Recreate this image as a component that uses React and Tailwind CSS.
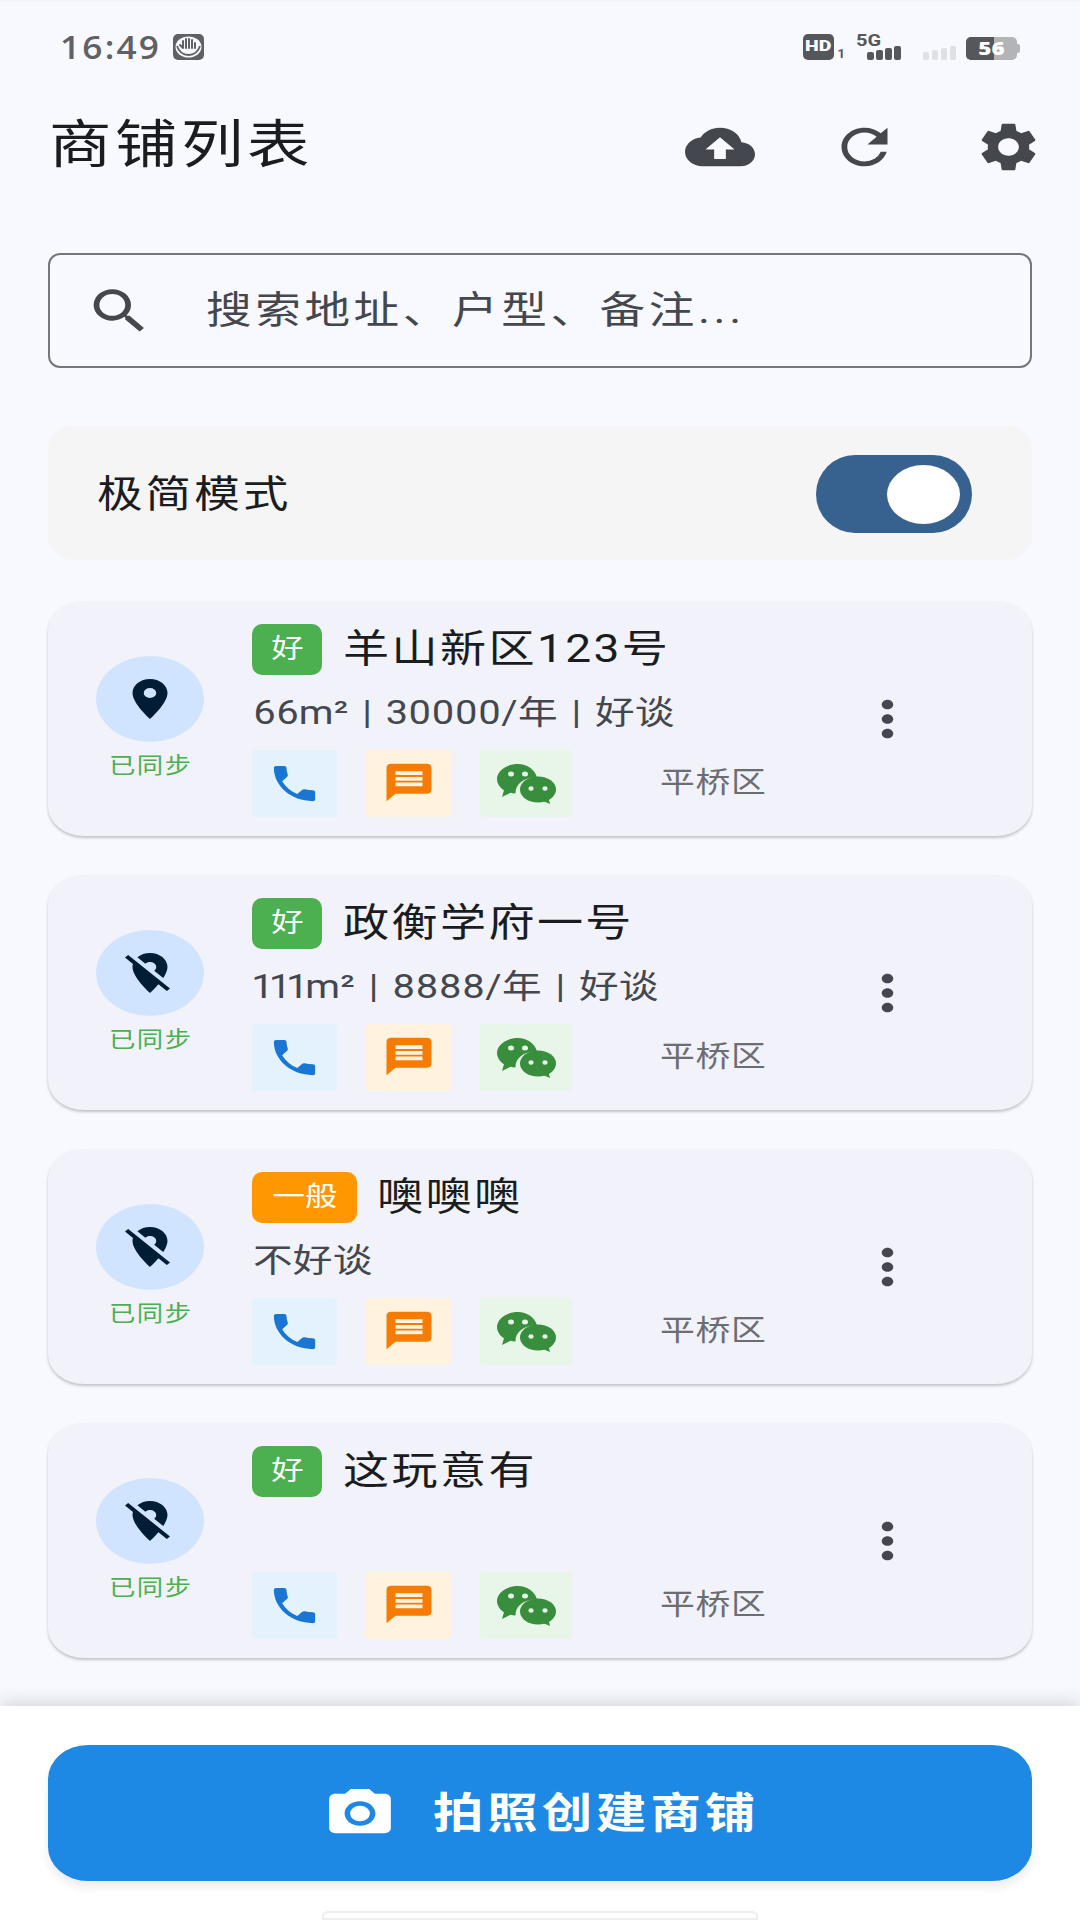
import React from "react";
import { MdCloudUpload, MdRefresh, MdSettings, MdSearch, MdMoreVert, MdPhone, MdMessage, MdPlace, MdLocationOff, MdCameraAlt } from "react-icons/md";

const FONT = "font-['Roboto','Noto_Sans_CJK_SC',sans-serif]";

function T({ className = "", children }) {
  return <span className={`inline-block origin-left scale-x-[1.2] whitespace-nowrap ${FONT} ${className}`}>{children}</span>;
}

function Icon({ as: C, w, h, className = "" }) {
  return <C preserveAspectRatio="none" style={{ width: w, height: h }} className={`shrink-0 ${className}`} />;
}

function Wechat() {
  return (
    <svg width="59" height="40" viewBox="0 0 59 40" className="shrink-0 mt-[1px]">
      <path d="M21 0C9.500 0 0 6.800 0 15c0 4.500 2.800 8.500 7 11.200L5 33l8.500-4.200c1.600.4 3.200.6 5 .7C18.200 20 27 13 40 13.500 38 5.500 30 0 21 0z" fill="#388e3c" />
      <ellipse cx="41" cy="25.500" rx="18" ry="13" fill="#388e3c" />
      <path d="M46 37l7 3-1.500-6z" fill="#388e3c" />
      <ellipse cx="14" cy="10" rx="3" ry="2.500" fill="#e8f5e9" />
      <ellipse cx="28" cy="10" rx="3" ry="2.500" fill="#e8f5e9" />
      <ellipse cx="34" cy="24.500" rx="2.600" ry="2.200" fill="#e8f5e9" />
      <ellipse cx="48" cy="24.500" rx="2.600" ry="2.200" fill="#e8f5e9" />
    </svg>
  );
}

function HandIcon() {
  return (
    <svg width="31" height="26" viewBox="0 0 31 26" className="shrink-0 ml-[15px]">
      <rect width="31" height="26" rx="5" fill="#5f6165" />
      <ellipse cx="15.500" cy="13" rx="13" ry="10.500" fill="#f8f9ff" />
      <path d="M4 12c2 6 6 9 11.500 9S25 18 27 12" fill="none" stroke="#5f6165" strokeWidth="1.800" />
      <path d="M10 14V7M13 14V5M16 14V5M19 14V6M22 14V9M10 14l-3-3" fill="none" stroke="#5f6165" strokeWidth="2" strokeLinecap="round" />
    </svg>
  );
}

function Bars({ color, ml = "" }) {
  const hs = [8, 10, 12, 14];
  return (
    <div className={`flex items-end gap-[2.500px] ${ml}`}>
      {hs.map((h, i) => (
        <div key={i} className="w-[6.500px] rounded-[2px]" style={{ height: h, background: color }} />
      ))}
    </div>
  );
}

function StatusBar() {
  return (
    <div className="h-[92px] flex items-center pl-[60px] pr-[60px] pt-[1px]">
      <span className="w-[98px] font-['Open_Sans',sans-serif] font-semibold text-[32px] leading-none text-[#5f6165] tracking-[2px] scale-x-[1.1] origin-left inline-block">16:49</span>
      <HandIcon />
      <div className="ml-auto flex items-end h-[26px]">
        <div className="w-[31px] h-[26px] rounded-[5px] bg-[#55575b] flex items-center justify-center">
          <span className="font-['Roboto',sans-serif] font-black text-[15px] leading-none text-white scale-x-[1.3] inline-block">HD</span>
        </div>
        <span className="font-['Roboto',sans-serif] font-bold text-[13px] leading-none text-[#55575b] ml-[4px] w-[18px]">1</span>
        <div className="relative w-[45px] h-[26px]">
          <span className="absolute left-0 -top-[1px] font-['Roboto',sans-serif] font-bold text-[16px] leading-none text-[#55575b] scale-x-[1.25] origin-left inline-block">5G</span>
          <div className="absolute right-0 bottom-0"><Bars color="#55575b" /></div>
        </div>
        <Bars color="#dfe0e3" ml="ml-[22px]" />
        <div className="relative ml-[10px] w-[51px] h-[23px] rounded-[5px] bg-[#b3b4b7] overflow-hidden flex items-center justify-center">
          <div className="absolute left-0 top-0 bottom-0 w-[28px] bg-[#55575b]" />
          <span className="relative font-['Open_Sans',sans-serif] font-extrabold text-[18px] leading-none text-white scale-x-[1.25] inline-block">56</span>
        </div>
        <div className="w-[3px] h-[9px] rounded-r-[2px] bg-[#b3b4b7] mb-[7px]" />
      </div>
    </div>
  );
}

function Header() {
  return (
    <div className="h-[104px] flex items-center pl-[49px] pr-[37px]">
      <T className="mt-[3px] text-[52px] leading-none text-[#1a1c1e] tracking-[3px]">商铺列表</T>
      <div className="ml-auto flex items-center gap-[75px] pt-[5px] text-[#44474e]">
        <Icon as={MdCloudUpload} w={70} h={58} />
        <Icon as={MdRefresh} w={69} h={58} />
        <Icon as={MdSettings} w={69} h={58} />
      </div>
    </div>
  );
}

function Search() {
  return (
    <div className="mt-[57px] mx-[48px] h-[115px] rounded-[12px] border-[2.500px] border-[#74777b] flex items-center pl-[35px]">
      <Icon as={MdSearch} w={69} h={58} className="text-[#44474e] mt-[1px]" />
      <T className="ml-[52px] -mt-[2px] text-[38px] leading-none text-[#44474e] tracking-[3px]">搜索地址、户型、备注...</T>
    </div>
  );
}

function Toggle() {
  return (
    <div className="mt-[58px] mx-[48px] h-[134px] rounded-[24px] bg-[#f5f5f6] flex items-center pl-[49px] pr-[60px] pt-[2px]">
      <T className="text-[38px] leading-none text-[#1a1c1e] tracking-[2.500px]">极简模式</T>
      <div className="ml-auto w-[156px] h-[78px] bg-[#37618e] rounded-full flex items-center justify-end pr-[12px]">
        <div className="w-[73px] h-[59px] rounded-[50%] bg-white" />
      </div>
    </div>
  );
}

function Card({ synced, badge, badgeW, badgeBg, title, titleGap, sub }) {
  return (
    <div className="h-[235px] rounded-[36px/30px] bg-[#f2f3fa] shadow-[0_2px_3px_rgba(0,0,0,0.22)] flex pl-[48px] items-center">
      <div className="w-[108px] flex flex-col items-center shrink-0 -mt-[3px]">
        <div className="w-[108px] h-[86px] rounded-[50%] bg-[#d1e4ff] flex items-center justify-center">
          <Icon as={synced ? MdPlace : MdLocationOff} w={60} h={48} className="text-[#001d36]" />
        </div>
        <T className="mt-[12px] self-start ml-[13px] text-[22px] leading-[24px] text-[#4caf50] tracking-[1.200px]">已同步</T>
      </div>
      <div className="ml-[48px] w-[601px] flex flex-col pt-[3px]">
        <div className="flex items-center h-[51px]">
          <div className={`h-[51px] rounded-[10px] flex items-center justify-center shrink-0 ${badgeBg} ${badgeW}`}>
            <span className={`inline-block scale-x-[1.2] text-[27px] leading-none text-white ${FONT}`}>{badge}</span>
          </div>
          <T className={`text-[38.400px] leading-none text-[#1a1c1e] tracking-[2px] ${titleGap}`}>{title}</T>
        </div>
        <div className="h-[75px] flex items-center pl-[1px]">
          <T className="text-[33px] leading-none text-[#44474e] tracking-[0.200px] [word-spacing:3px] proportional-nums">{sub}</T>
        </div>
        <div className="flex items-center h-[67px]">
          <div className="w-[85px] h-[67px] bg-[#e3f2fd] rounded-[4px] flex items-center justify-center">
            <Icon as={MdPhone} w={55} h={47} className="text-[#1976d2] mt-[1px]" />
          </div>
          <div className="ml-[29px] w-[85px] h-[67px] bg-[#fff3e0] rounded-[4px] flex items-center justify-center">
            <Icon as={MdMessage} w={54} h={45} className="text-[#f57c00] -mt-[2px]" />
          </div>
          <div className="ml-[29px] w-[92px] h-[67px] bg-[#e8f5e9] rounded-[4px] flex items-center justify-center">
            <Wechat />
          </div>
          <T className="ml-[88px] mt-[1px] text-[29px] leading-none text-[#6b6d72] tracking-[0.600px]">平桥区</T>
        </div>
      </div>
      <Icon as={MdMoreVert} w={69} h={58} className="text-[#44474e]" />
    </div>
  );
}

const GOOD = { badge: "好", badgeW: "w-[70px]", badgeBg: "bg-[#4caf50]", titleGap: "ml-[21px]" };
const SO = { badge: "一般", badgeW: "w-[105px]", badgeBg: "bg-[#ff9800]", titleGap: "ml-[20px]" };

export default function App() {
  return (
    <div className="w-[1080px] h-[1920px] overflow-hidden bg-[#f8f9ff] flex flex-col border-t-2 border-[#f1f4fa]">
      <div className="flex-1 min-h-0 overflow-hidden -mt-[2px]">
        <StatusBar />
        <Header />
        <Search />
        <Toggle />
        <div className="mt-[41px] mx-[48px] flex flex-col gap-[39px]">
          <Card synced {...GOOD} title="羊山新区123号" sub="66m² | 30000/年 | 好谈" />
          <Card {...GOOD} title="政衡学府一号" sub="111m² | 8888/年 | 好谈" />
          <Card {...SO} title="噢噢噢" sub="不好谈" />
          <Card {...GOOD} title="这玩意有" sub="" />
        </div>
      </div>
      <div className="relative h-[214px] shrink-0 bg-white shadow-[0_-4px_16px_rgba(0,0,0,0.14)] px-[48px] pt-[39px]">
        <div className="h-[136px] rounded-[40px/34px] bg-[#1e88e5] shadow-[0_6px_10px_rgba(0,0,0,0.08)] flex items-center pl-[275px]">
          <Icon as={MdCameraAlt} w={74} h={59} className="text-white" />
          <T className="ml-[36px] mt-[1px] text-[42px] leading-none font-bold text-white tracking-[3.300px]">拍照创建商铺</T>
        </div>
        <div className="absolute bottom-0 left-[322px] w-[436px] h-[9px] rounded-t-[6px] border-2 border-[#eeeeee] bg-white" />
      </div>
    </div>
  );
}
